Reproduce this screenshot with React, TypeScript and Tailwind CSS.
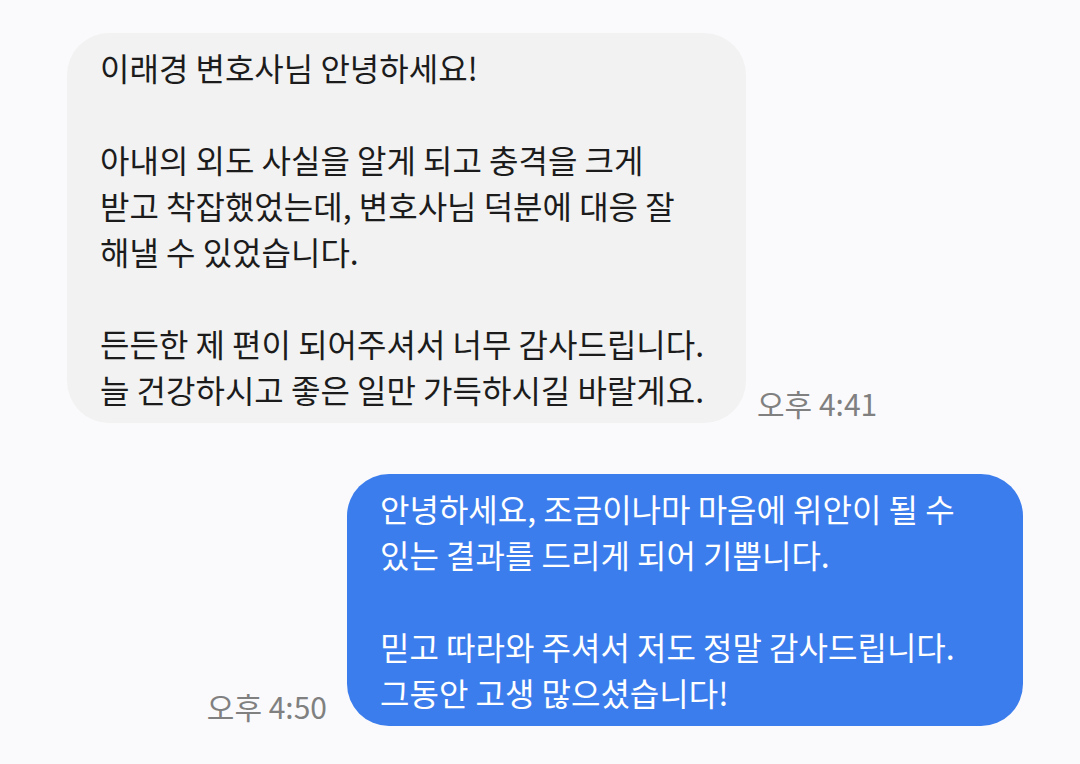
import React from "react";

const font = { fontFamily: '"Noto Sans CJK KR", "Noto Sans", sans-serif' };

export default function App() {
  const left = [
    "이래경 변호사님 안녕하세요!",
    "",
    "아내의 외도 사실을 알게 되고 충격을 크게",
    "받고 착잡했었는데, 변호사님 덕분에 대응 잘",
    "해낼 수 있었습니다.",
    "",
    "든든한 제 편이 되어주셔서 너무 감사드립니다.",
    "늘 건강하시고 좋은 일만 가득하시길 바랄게요.",
  ];
  const right = [
    "안녕하세요, 조금이나마 마음에 위안이 될 수",
    "있는 결과를 드리게 되어 기쁩니다.",
    "",
    "믿고 따라와 주셔서 저도 정말 감사드립니다.",
    "그동안 고생 많으셨습니다!",
  ];
  return (
    <div className="w-[1080px] h-[764px] bg-[#fafafc] overflow-hidden pt-[33px]" style={font}>
      <div className="flex items-end pl-[67px]">
        <div className="w-[679px] bg-[#f2f2f2] rounded-[42px] px-[33px] py-[11px] text-[#1c1c1c] text-[32px] leading-[46px]">
          {left.map((l, i) => (
            <div key={i} className="whitespace-nowrap h-[46px]">{l}</div>
          ))}
        </div>
        <div className="ml-[11px] mb-[2px] text-[30px] leading-[36px] text-[#808080]">오후 4:41</div>
      </div>
      <div className="flex items-end justify-end pr-[57px] mt-[51px]">
        <div className="mr-[20px] mb-[2px] text-[30px] leading-[36px] text-[#808080]">오후 4:50</div>
        <div className="w-[676px] bg-[#3b7ded] rounded-[42px] px-[33px] py-[11px] text-white text-[32px] leading-[46px]">
          {right.map((l, i) => (
            <div key={i} className="whitespace-nowrap h-[46px]">{l}</div>
          ))}
        </div>
      </div>
    </div>
  );
}
